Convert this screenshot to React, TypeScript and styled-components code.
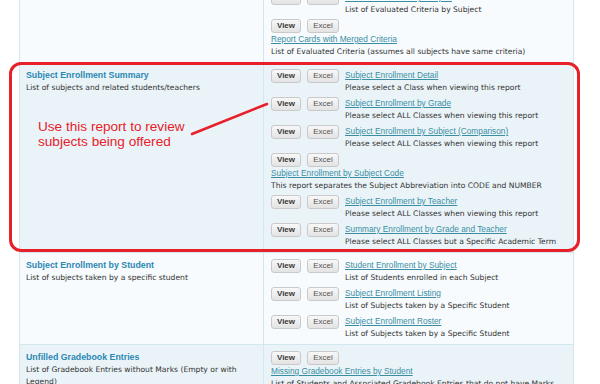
import React from 'react';
import styled, { createGlobalStyle } from 'styled-components';

//global
const GlobalStyle = createGlobalStyle`
  html, body {
    margin: 0;
    padding: 0;
    background: #fff;
  }
  body {
    font-family: "Liberation Sans", Arial, sans-serif;
    width: 600px;
    height: 384px;
    overflow: hidden;
  }
`;

const colors = {
  border: '#d3e7ef',
  rowLight: '#f7fbfd',
  rowBlue: '#eaf4f8',
  title: '#2b88b4',
  link: '#3a8ea4',
  text: '#333',
  red: '#e8202a',
};

//styled
const Page = styled.div`
  position: relative;
  display: flow-root;
  width: 600px;
  height: 384px;
`;

const ReportTable = styled.div`
  margin: -16px 0 0 19px;
  width: 553px;
  border-left: 1px solid ${colors.border};
  border-right: 1px solid ${colors.border};
`;

const Row = styled.div<{ $blue?: boolean }>`
  display: grid;
  grid-template-columns: 244px 1fr;
  background-color: ${(p) => (p.$blue ? colors.rowBlue : colors.rowLight)};
  border-top: 1px solid ${colors.border};
`;

const InfoCell = styled.div`
  padding: 6px 8px 4px 6px;
  border-right: 1px solid ${colors.border};
`;

const Title = styled.div`
  color: ${colors.title};
  font-weight: bold;
  font-size: 8.8px;
  line-height: 12.5px;
`;

const Desc = styled.div`
  color: ${colors.text};
  font-family: "DejaVu Sans", "Liberation Sans", sans-serif;
  font-size: 7.6px;
  line-height: 12.5px;
`;

const ReportsCell = styled.div`
  display: flex;
  flex-direction: column;
  gap: 3px;
  padding: 6px 6px 4px 7px;
`;

const Report = styled.div<{ $stacked?: boolean }>`
  display: flex;
  flex-direction: ${(p) => (p.$stacked ? 'column' : 'row')};
  align-items: flex-start;
  gap: ${(p) => (p.$stacked ? '0' : '6px')};
`;

const Buttons = styled.div`
  display: flex;
  gap: 6px;
`;

const Button = styled.button<{ $primary?: boolean }>`
  box-sizing: border-box;
  height: 14px;
  width: ${(p) => (p.$primary ? '30px' : '32px')};
  padding: 0;
  font-family: inherit;
  font-size: 8px;
  font-weight: ${(p) => (p.$primary ? 600 : 400)};
  color: ${(p) => (p.$primary ? '#3a3a3a' : '#555')};
  background: linear-gradient(#f8f8f8, #e3e3e3);
  border: 1px solid #c9c9c9;
  border-radius: 3px;
  line-height: 12px;
`;

const LinkText = styled.a`
  display: block;
  color: ${colors.link};
  font-size: 8.3px;
  line-height: 12.5px;
  text-decoration: underline;
`;

const Callout = styled.div`
  position: absolute;
  left: 9px;
  top: 62px;
  width: 571px;
  height: 190px;
  box-sizing: border-box;
  border: 3px solid ${colors.red};
  border-radius: 12px;
  pointer-events: none;
`;

const CalloutText = styled.div`
  position: absolute;
  left: 38px;
  top: 119px;
  color: ${colors.red};
  font-size: 13.6px;
  line-height: 15px;
`;

const CalloutArrow = styled.svg`
  position: absolute;
  left: 0;
  top: 0;
  pointer-events: none;
`;

//data
interface ReportItem {
  link: string;
  desc: string;
  stacked?: boolean;
}

interface Section {
  title?: string;
  desc?: string;
  blue?: boolean;
  reports: ReportItem[];
}

const sections: Section[] = [
  {
    reports: [
      { link: 'Evaluated Criteria by Subject', desc: 'List of Evaluated Criteria by Subject' },
      {
        link: 'Report Cards with Merged Criteria',
        desc: 'List of Evaluated Criteria (assumes all subjects have same criteria)',
        stacked: true,
      },
    ],
  },
  {
    title: 'Subject Enrollment Summary',
    desc: 'List of subjects and related students/teachers',
    blue: true,
    reports: [
      { link: 'Subject Enrollment Detail', desc: 'Please select a Class when viewing this report' },
      { link: 'Subject Enrollment by Grade', desc: 'Please select ALL Classes when viewing this report' },
      { link: 'Subject Enrollment by Subject (Comparison)', desc: 'Please select ALL Classes when viewing this report' },
      {
        link: 'Subject Enrollment by Subject Code',
        desc: 'This report separates the Subject Abbreviation into CODE and NUMBER',
        stacked: true,
      },
      { link: 'Subject Enrollment by Teacher', desc: 'Please select ALL Classes when viewing this report' },
      { link: 'Summary Enrollment by Grade and Teacher', desc: 'Please select ALL Classes but a Specific Academic Term' },
    ],
  },
  {
    title: 'Subject Enrollment by Student',
    desc: 'List of subjects taken by a specific student',
    reports: [
      { link: 'Student Enrollment by Subject', desc: 'List of Students enrolled in each Subject' },
      { link: 'Subject Enrollment Listing', desc: 'List of Subjects taken by a Specific Student' },
      { link: 'Subject Enrollment Roster', desc: 'List of Subjects taken by a Specific Student' },
    ],
  },
  {
    title: 'Unfilled Gradebook Entries',
    desc: 'List of Gradebook Entries without Marks (Empty or with Legend)',
    blue: true,
    reports: [
      {
        link: 'Missing Gradebook Entries by Student',
        desc: 'List of Students and Associated Gradebook Entries that do not have Marks',
        stacked: true,
      },
    ],
  },
];

const App: React.FC = () => {
  return (
    <Page>
      <GlobalStyle />
      <ReportTable>
        {sections.map((s, i) => (
          <Row key={i} $blue={s.blue}>
            <InfoCell>
              {s.title && <Title>{s.title}</Title>}
              {s.desc && <Desc>{s.desc}</Desc>}
            </InfoCell>
            <ReportsCell>
              {s.reports.map((r) => (
                <Report key={r.link} $stacked={r.stacked}>
                  <Buttons>
                    <Button $primary>View</Button>
                    <Button>Excel</Button>
                  </Buttons>
                  <div>
                    <LinkText href="#">{r.link}</LinkText>
                    <Desc>{r.desc}</Desc>
                  </div>
                </Report>
              ))}
            </ReportsCell>
          </Row>
        ))}
      </ReportTable>
      <Callout />
      <CalloutText>
        Use this report to review
        <br />
        subjects being offered
      </CalloutText>
      <CalloutArrow width="600" height="384" viewBox="0 0 600 384">
        <line x1="192" y1="134" x2="267" y2="104" stroke={colors.red} strokeWidth="2.6" strokeLinecap="round" />
      </CalloutArrow>
    </Page>
  );
};

export default App;
